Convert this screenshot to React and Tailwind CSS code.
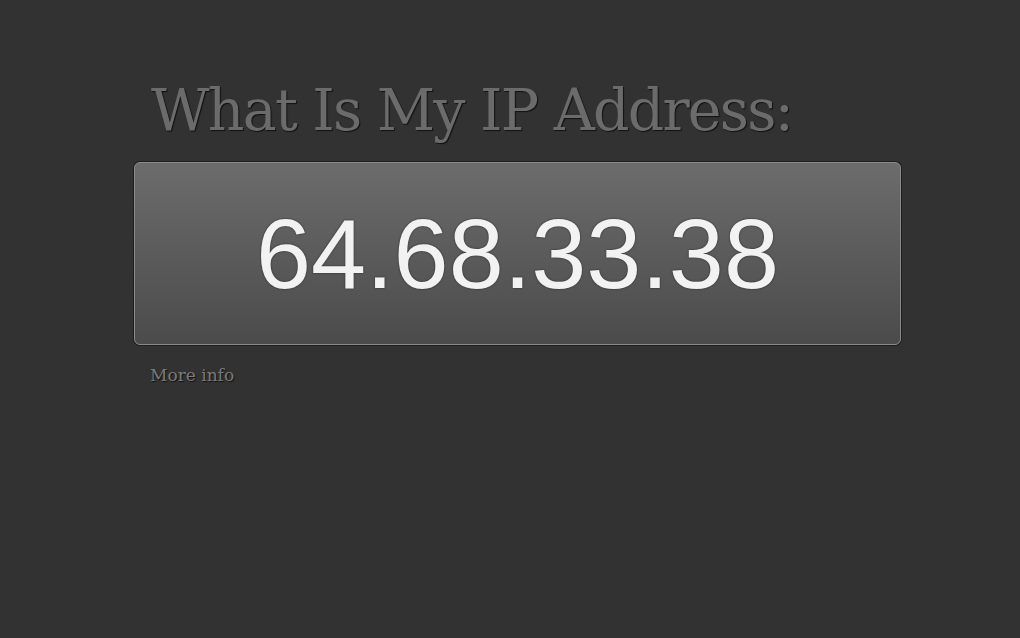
export default function App() {
  return (
    <div className="min-h-[638px] w-full bg-[#323232] font-['DejaVu_Serif',Georgia,serif]">
      <div className="ml-[134px] w-[767px] pt-[74px]">
        <h1 className="pl-[17px] text-[57px] leading-[72px] tracking-[-1.8px] text-[#6b6b6b] [text-shadow:1px_1px_1px_#111]">
          What Is My IP Address:
        </h1>
        <div className="mt-[16px] flex h-[183px] items-center justify-center rounded-[6px] border border-[#8a8a8a] bg-gradient-to-b from-[#6c6c6c] to-[#4b4b4b] shadow-[0_0_0_1px_#1e1e1e]">
          <span className="font-['Liberation_Sans',Arial,sans-serif] text-[99px] leading-none text-[#f2f2f2] [text-shadow:0_0_2px_#222]">
            64.68.33.38
          </span>
        </div>
        <a className="mt-[19px] ml-[16px] block text-[17px] leading-[22px] text-[#7a7a7a] [text-shadow:1px_1px_1px_#111]">
          More info
        </a>
      </div>
    </div>
  );
}
